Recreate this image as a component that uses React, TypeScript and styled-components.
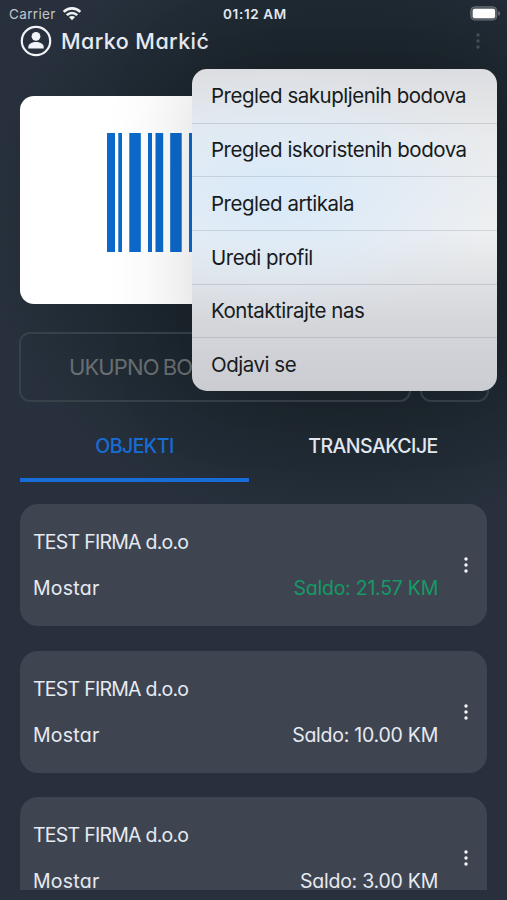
import React from "react";
import styled, { createGlobalStyle } from "styled-components";

const GlobalStyle = createGlobalStyle`
  * { box-sizing: border-box; }
  body { margin: 0; background: #27303c; }
`;

const Screen = styled.main`
  position: relative;
  width: 507px;
  height: 900px;
  overflow: hidden;
  display: flex;
  flex-direction: column;
  color: #e6eaf3;
  font-family: Inter, "Noto Sans", sans-serif;
  font-feature-settings: "cv11", "ss03";
  background: radial-gradient(ellipse 360px 310px at 344px 225px, #1b252c 55%, #27303c 100%) #27303c;
`;

const StatusBar = styled.header`
  display: grid;
  grid-template-columns: 1fr auto 1fr;
  align-items: center;
  height: 26px;
  padding: 1px 6px 0 9px;
  font-size: 13.5px;
  font-feature-settings: normal;
`;

const Carrier = styled.div`
  display: flex;
  align-items: center;
  gap: 6px;
  color: #c3c7cd;
  letter-spacing: 0.35px;
`;

const Clock = styled.time`
  font-size: 13.5px;
  font-weight: 600;
  letter-spacing: 0.65px;
`;

const BatteryIcon = styled.svg`
  justify-self: end;
`;

const ProfileBar = styled.div`
  display: flex;
  align-items: center;
  height: 30px;
  padding: 0 24px 0 20px;
`;

const UserName = styled.h1`
  flex: 1;
  margin: 0 0 0 9px;
  font-size: 21.5px;
  font-weight: 500;
  letter-spacing: 0.42px;
`;

const Dots = styled.svg<{ $muted?: boolean }>`
  display: block;
  width: 10px;
  height: 20px;
  fill: ${(p) => (p.$muted ? "#48515a" : "#f4f6fa")};
`;

const BarcodeCard = styled.section`
  flex: none;
  height: 208px;
  margin: 40px 20px 0;
  padding: 37px 87px 0;
  border-radius: 14px;
  background: #fff;
`;

const TotalRow = styled.div`
  display: flex;
  gap: 9px;
  margin: 28px 18px 0 19px;
`;

const OutlineBox = styled.div<{ $width: number }>`
  display: flex;
  align-items: center;
  width: ${(p) => p.$width}px;
  height: 70px;
  padding-left: 48px;
  border: 2px solid #37414a;
  border-radius: 11px;
  color: #686e71;
  font-size: 22px;
  letter-spacing: -0.9px;
  word-spacing: -1px;
  white-space: nowrap;
  overflow: hidden;
`;

const Tabs = styled.nav`
  display: grid;
  grid-template-columns: 229px 1fr;
  height: 80px;
  margin: 0 20px;
`;

const Tab = styled.div<{ $active?: boolean }>`
  display: flex;
  align-items: center;
  justify-content: center;
  padding-top: 11px;
  padding-left: ${(p) => (p.$active ? 0 : 10)}px;
  border-bottom: 4px solid ${(p) => (p.$active ? "#176dd6" : "transparent")};
  color: ${(p) => (p.$active ? "#176dd6" : "#e6eaf3")};
  font-size: 19.5px;
  font-weight: 500;
  letter-spacing: ${(p) => (p.$active ? -0.55 : -0.55)}px;
`;

const CompanyList = styled.section`
  display: flex;
  flex-direction: column;
  gap: 24.5px;
  height: 386px;
  margin: 22px 20px 0;
  overflow: hidden;
`;

const CompanyCard = styled.article`
  flex: none;
  display: flex;
  align-items: center;
  height: 122px;
  padding: 0 16px 0 13px;
  border-radius: 18px;
  background: #3f4550;
`;

const CompanyInfo = styled.div`
  flex: 1;
  display: flex;
  flex-direction: column;
  gap: 22px;
  font-size: 19.5px;
  line-height: 24px;
`;

const Company = styled.div`
  letter-spacing: -0.75px;
`;

const CompanyLine = styled.div`
  display: flex;
  justify-content: space-between;
  letter-spacing: 0.25px;
`;

const Balance = styled.span<{ $positive?: boolean }>`
  color: ${(p) => (p.$positive ? "#159a66" : "#e6eaf3")};
  letter-spacing: -0.25px;
`;

const CardDots = styled.div`
  margin-left: 23px;
`;

const Menu = styled.ul`
  position: absolute;
  top: 69px;
  left: 192px;
  width: 305px;
  height: 322px;
  margin: 0;
  padding: 0;
  display: grid;
  grid-template-rows: repeat(6, 1fr);
  list-style: none;
  border-radius: 15px;
  overflow: hidden;
  background:
    radial-gradient(ellipse 230px 130px at 85px 125px, #dbeaf8 15%, rgba(219, 234, 248, 0) 100%),
    linear-gradient(to bottom, #dcdde0 0%, #e9ebed 22%, #eff0f1 50%, #d6d8dc 76%, #cbccd2 100%);
  box-shadow: 0 0 85px rgba(0, 0, 0, 0.16);
`;

const MenuItem = styled.li`
  display: flex;
  align-items: center;
  padding-left: 19px;
  color: #171b20;
  font-size: 20.5px;
  font-feature-settings: normal;
  letter-spacing: -0.48px;
  white-space: nowrap;

  & + & {
    border-top: 1px solid rgba(60, 75, 90, 0.16);
  }
`;

const bars = [
  [0, 8], [11.3, 3.7], [22.3, 11.5], [41, 4], [48.5, 7.7], [63.2, 11.5], [82, 4],
  [93, 8], [108, 4], [119, 11], [137, 8],
];

const menuItems = [
  "Pregled sakupljenih bodova",
  "Pregled iskoristenih bodova",
  "Pregled artikala",
  "Uredi profil",
  "Kontaktirajte nas",
  "Odjavi se",
];

const companies = [
  { balance: "21.57", positive: true },
  { balance: "10.00", positive: false },
  { balance: "3.00", positive: false },
];

function MoreDots({ muted }: { muted?: boolean }) {
  return (
    <Dots viewBox="0 0 10 20" $muted={muted}>
      <circle cx="5" cy="4" r="1.7" />
      <circle cx="5" cy="10" r="1.7" />
      <circle cx="5" cy="16" r="1.7" />
    </Dots>
  );
}

export default function App() {
  return (
    <>
      <GlobalStyle />
      <Screen>
        <StatusBar>
          <Carrier>
            Carrier
            <svg width="20" height="15" viewBox="0 0 20 15" fill="none" stroke="#f1f3f6" strokeWidth="2.6">
              <path d="M1.7 5.8C6.3 1.2 13.7 1.2 18.3 5.8" />
              <path d="M4.8 9.1C7.7 6.2 12.3 6.2 15.2 9.1" />
              <path d="M10 14.2L6.9 11.1C8.6 9.5 11.4 9.5 13.1 11.1Z" fill="#f1f3f6" stroke="none" />
            </svg>
          </Carrier>
          <Clock>01:12 AM</Clock>
          <BatteryIcon width="31" height="15" viewBox="0 0 31 15">
            <rect x=".8" y=".8" width="26" height="13.2" rx="4" fill="#4e545c" stroke="#6b7076" />
            <rect x="2.7" y="2.8" width="22.4" height="9.4" rx="2" fill="#fff" />
            <path d="M28.2 5.2C30.8 5.8 30.8 9.2 28.2 9.8Z" fill="#6b7076" />
          </BatteryIcon>
        </StatusBar>

        <ProfileBar>
          <svg width="32" height="32" viewBox="0 0 32 32" fill="#f1f3f8">
            <circle cx="16" cy="16" r="14.2" fill="none" stroke="#f1f3f8" strokeWidth="2.2" />
            <circle cx="16" cy="11.3" r="4.4" />
            <path d="M8.3 23.6V21.8C8.3 18.8 12.4 17 16 17S23.7 18.8 23.7 21.8V23.6Z" />
          </svg>
          <UserName>Marko Markić</UserName>
          <MoreDots muted />
        </ProfileBar>

        <BarcodeCard>
          <svg width="293" height="119" fill="#0c69cb">
            {bars.map(([x, w]) => (
              <rect key={x} x={x} y="0" width={w} height="119" />
            ))}
          </svg>
        </BarcodeCard>

        <TotalRow>
          <OutlineBox $width={392}>UKUPNO BODOVA</OutlineBox>
          <OutlineBox $width={69} />
        </TotalRow>

        <Tabs>
          <Tab $active>OBJEKTI</Tab>
          <Tab>TRANSAKCIJE</Tab>
        </Tabs>

        <CompanyList>
          {companies.map((c) => (
            <CompanyCard key={c.balance}>
              <CompanyInfo>
                <Company>TEST FIRMA d.o.o</Company>
                <CompanyLine>
                  <span>Mostar</span>
                  <Balance $positive={c.positive}>Saldo: {c.balance} KM</Balance>
                </CompanyLine>
              </CompanyInfo>
              <CardDots>
                <MoreDots />
              </CardDots>
            </CompanyCard>
          ))}
        </CompanyList>

        <Menu>
          {menuItems.map((label) => (
            <MenuItem key={label}>{label}</MenuItem>
          ))}
        </Menu>
      </Screen>
    </>
  );
}
